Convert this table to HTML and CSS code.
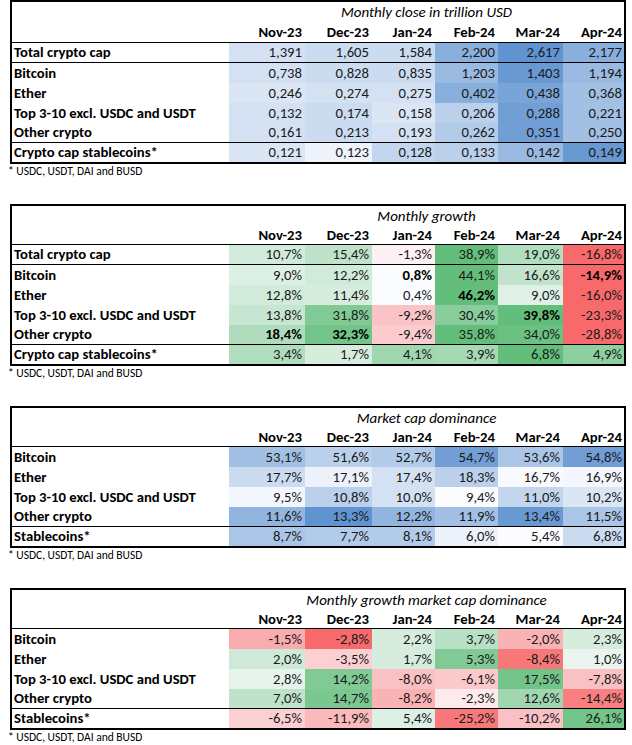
FILE: index.html
```html
<!DOCTYPE html>
<html lang="en">
<head>
<meta charset="utf-8">
<title>Crypto market tables</title>
<link rel="stylesheet" href="styles.css">
</head>
<body>
<section class="block">
  <div class="tbl first">
    <div class="blank"></div>
    <div class="title">Monthly close in trillion USD</div>
    <div class="mon">Nov-23</div><div class="mon">Dec-23</div><div class="mon">Jan-24</div><div class="mon">Feb-24</div><div class="mon">Mar-24</div><div class="mon">Apr-24</div>

    <div class="row sep"><div class="lab">Total crypto cap</div><div class="v" style="background:rgb(211,225,243)">1,391</div><div class="v" style="background:rgb(203,219,240)">1,605</div><div class="v" style="background:rgb(203,219,240)">1,584</div><div class="v" style="background:rgb(137,175,220)">2,200</div><div class="v" style="background:rgb(96,148,208)">2,617</div><div class="v" style="background:rgb(137,175,220)">2,177</div></div>
    <div class="row"><div class="lab">Bitcoin</div><div class="v" style="background:rgb(211,225,243)">0,738</div><div class="v" style="background:rgb(203,219,240)">0,828</div><div class="v" style="background:rgb(203,219,240)">0,835</div><div class="v" style="background:rgb(154,186,225)">1,203</div><div class="v" style="background:rgb(104,153,210)">1,403</div><div class="v" style="background:rgb(154,186,225)">1,194</div></div>
    <div class="row"><div class="lab">Ether</div><div class="v" style="background:rgb(219,230,245)">0,246</div><div class="v" style="background:rgb(211,225,243)">0,274</div><div class="v" style="background:rgb(211,225,243)">0,275</div><div class="v" style="background:rgb(137,175,220)">0,402</div><div class="v" style="background:rgb(121,164,215)">0,438</div><div class="v" style="background:rgb(162,192,228)">0,368</div></div>
    <div class="row"><div class="lab">Top 3-10 excl. USDC and USDT</div><div class="v" style="background:rgb(211,225,243)">0,132</div><div class="v" style="background:rgb(203,219,240)">0,174</div><div class="v" style="background:rgb(219,230,245)">0,158</div><div class="v" style="background:rgb(186,208,235)">0,206</div><div class="v" style="background:rgb(113,159,213)">0,288</div><div class="v" style="background:rgb(162,192,228)">0,221</div></div>
    <div class="row sep"><div class="lab">Other crypto</div><div class="v" style="background:rgb(211,225,243)">0,161</div><div class="v" style="background:rgb(203,219,240)">0,213</div><div class="v" style="background:rgb(211,225,243)">0,193</div><div class="v" style="background:rgb(178,203,233)">0,262</div><div class="v" style="background:rgb(113,159,213)">0,351</div><div class="v" style="background:rgb(162,192,228)">0,250</div></div>
    <div class="row last"><div class="lab">Crypto cap stablecoins*</div><div class="v" style="background:rgb(219,230,245)">0,121</div><div class="v" style="background:rgb(239,243,251)">0,123</div><div class="v" style="background:rgb(195,214,238)">0,128</div><div class="v" style="background:rgb(186,208,235)">0,133</div><div class="v" style="background:rgb(154,186,225)">0,142</div><div class="v" style="background:rgb(104,153,210)">0,149</div></div>
  </div>
  <p class="note">* USDC, USDT, DAI and BUSD</p>
</section>

<section class="block">
  <div class="tbl">
    <div class="blank"></div>
    <div class="title">Monthly growth</div>
    <div class="mon">Nov-23</div><div class="mon">Dec-23</div><div class="mon">Jan-24</div><div class="mon">Feb-24</div><div class="mon">Mar-24</div><div class="mon">Apr-24</div>

    <div class="row sep"><div class="lab">Total crypto cap</div><div class="v" style="background:rgb(209,235,218)">10,7%</div><div class="v" style="background:rgb(191,227,202)">15,4%</div><div class="v" style="background:rgb(252,240,243)">-1,3%</div><div class="v" style="background:rgb(99,190,123)">38,9%</div><div class="v" style="background:rgb(177,222,190)">19,0%</div><div class="v" style="background:rgb(248,105,107)">-16,8%</div></div>
    <div class="row"><div class="lab">Bitcoin</div><div class="v" style="background:rgb(221,240,229)">9,0%</div><div class="v" style="background:rgb(209,235,218)">12,2%</div><div class="v b" style="background:rgb(249,251,252)">0,8%</div><div class="v" style="background:rgb(99,190,123)">44,1%</div><div class="v" style="background:rgb(194,228,205)">16,6%</div><div class="v b" style="background:rgb(248,105,107)">-14,9%</div></div>
    <div class="row"><div class="lab">Ether</div><div class="v" style="background:rgb(209,235,218)">12,8%</div><div class="v" style="background:rgb(214,237,222)">11,4%</div><div class="v" style="background:rgb(250,251,254)">0,4%</div><div class="v b" style="background:rgb(99,190,123)">46,2%</div><div class="v" style="background:rgb(223,240,230)">9,0%</div><div class="v" style="background:rgb(248,105,107)">-16,0%</div></div>
    <div class="row"><div class="lab">Top 3-10 excl. USDC and USDT</div><div class="v" style="background:rgb(198,230,209)">13,8%</div><div class="v" style="background:rgb(130,202,149)">31,8%</div><div class="v" style="background:rgb(250,195,197)">-9,2%</div><div class="v" style="background:rgb(136,205,155)">30,4%</div><div class="v b" style="background:rgb(99,190,123)">39,8%</div><div class="v" style="background:rgb(248,105,107)">-23,3%</div></div>
    <div class="row sep"><div class="lab">Other crypto</div><div class="v b" style="background:rgb(174,220,188)">18,4%</div><div class="v b" style="background:rgb(114,196,136)">32,3%</div><div class="v" style="background:rgb(251,203,206)">-9,4%</div><div class="v" style="background:rgb(99,190,123)">35,8%</div><div class="v" style="background:rgb(107,193,130)">34,0%</div><div class="v" style="background:rgb(248,105,107)">-28,8%</div></div>
    <div class="row last"><div class="lab">Crypto cap stablecoins*</div><div class="v" style="background:rgb(176,221,189)">3,4%</div><div class="v" style="background:rgb(214,237,222)">1,7%</div><div class="v" style="background:rgb(160,215,176)">4,1%</div><div class="v" style="background:rgb(165,217,180)">3,9%</div><div class="v" style="background:rgb(99,190,123)">6,8%</div><div class="v" style="background:rgb(142,207,160)">4,9%</div></div>
  </div>
  <p class="note">* USDC, USDT, DAI and BUSD</p>
</section>

<section class="block">
  <div class="tbl">
    <div class="blank"></div>
    <div class="title">Market cap dominance</div>
    <div class="mon">Nov-23</div><div class="mon">Dec-23</div><div class="mon">Jan-24</div><div class="mon">Feb-24</div><div class="mon">Mar-24</div><div class="mon">Apr-24</div>

    <div class="row"><div class="lab">Bitcoin</div><div class="v" style="background:rgb(162,192,228)">53,1%</div><div class="v" style="background:rgb(186,208,235)">51,6%</div><div class="v" style="background:rgb(178,203,233)">52,7%</div><div class="v" style="background:rgb(113,159,213)">54,7%</div><div class="v" style="background:rgb(170,197,230)">53,6%</div><div class="v" style="background:rgb(113,159,213)">54,8%</div></div>
    <div class="row"><div class="lab">Ether</div><div class="v" style="background:rgb(203,219,240)">17,7%</div><div class="v" style="background:rgb(236,241,250)">17,1%</div><div class="v" style="background:rgb(211,225,243)">17,4%</div><div class="v" style="background:rgb(186,208,235)">18,3%</div><div class="v" style="background:rgb(249,250,254)">16,7%</div><div class="v" style="background:rgb(244,247,253)">16,9%</div></div>
    <div class="row"><div class="lab">Top 3-10 excl. USDC and USDT</div><div class="v" style="background:rgb(244,247,253)">9,5%</div><div class="v" style="background:rgb(186,208,235)">10,8%</div><div class="v" style="background:rgb(211,225,243)">10,0%</div><div class="v" style="background:rgb(252,252,255)">9,4%</div><div class="v" style="background:rgb(195,214,238)">11,0%</div><div class="v" style="background:rgb(219,230,245)">10,2%</div></div>
    <div class="row sep"><div class="lab">Other crypto</div><div class="v" style="background:rgb(146,181,223)">11,6%</div><div class="v" style="background:rgb(96,148,208)">13,3%</div><div class="v" style="background:rgb(146,181,223)">12,2%</div><div class="v" style="background:rgb(162,192,228)">11,9%</div><div class="v" style="background:rgb(104,153,210)">13,4%</div><div class="v" style="background:rgb(170,197,230)">11,5%</div></div>
    <div class="row last"><div class="lab">Stablecoins*</div><div class="v" style="background:rgb(170,197,230)">8,7%</div><div class="v" style="background:rgb(178,203,233)">7,7%</div><div class="v" style="background:rgb(178,203,233)">8,1%</div><div class="v" style="background:rgb(236,241,250)">6,0%</div><div class="v" style="background:rgb(252,252,255)">5,4%</div><div class="v" style="background:rgb(203,219,240)">6,8%</div></div>
  </div>
  <p class="note">* USDC, USDT, DAI and BUSD</p>
</section>

<section class="block">
  <div class="tbl">
    <div class="blank"></div>
    <div class="title">Monthly growth market cap dominance</div>
    <div class="mon">Nov-23</div><div class="mon">Dec-23</div><div class="mon">Jan-24</div><div class="mon">Feb-24</div><div class="mon">Mar-24</div><div class="mon">Apr-24</div>

    <div class="row"><div class="lab">Bitcoin</div><div class="v" style="background:rgb(250,171,174)">-1,5%</div><div class="v" style="background:rgb(248,105,107)">-2,8%</div><div class="v" style="background:rgb(214,237,222)">2,2%</div><div class="v" style="background:rgb(183,224,196)">3,7%</div><div class="v" style="background:rgb(250,179,181)">-2,0%</div><div class="v" style="background:rgb(214,237,222)">2,3%</div></div>
    <div class="row"><div class="lab">Ether</div><div class="v" style="background:rgb(206,233,215)">2,0%</div><div class="v" style="background:rgb(251,208,211)">-3,5%</div><div class="v" style="background:rgb(214,237,222)">1,7%</div><div class="v" style="background:rgb(130,202,149)">5,3%</div><div class="v" style="background:rgb(248,120,122)">-8,4%</div><div class="v" style="background:rgb(234,245,239)">1,0%</div></div>
    <div class="row"><div class="lab">Top 3-10 excl. USDC and USDT</div><div class="v" style="background:rgb(229,243,235)">2,8%</div><div class="v" style="background:rgb(130,202,149)">14,2%</div><div class="v" style="background:rgb(250,193,196)">-8,0%</div><div class="v" style="background:rgb(251,201,203)">-6,1%</div><div class="v" style="background:rgb(114,196,136)">17,5%</div><div class="v" style="background:rgb(250,193,196)">-7,8%</div></div>
    <div class="row sep"><div class="lab">Other crypto</div><div class="v" style="background:rgb(191,227,202)">7,0%</div><div class="v" style="background:rgb(122,199,143)">14,7%</div><div class="v" style="background:rgb(250,179,181)">-8,2%</div><div class="v" style="background:rgb(252,234,237)">-2,3%</div><div class="v" style="background:rgb(160,215,176)">12,6%</div><div class="v" style="background:rgb(249,127,129)">-14,4%</div></div>
    <div class="row last"><div class="lab">Stablecoins*</div><div class="v" style="background:rgb(251,208,211)">-6,5%</div><div class="v" style="background:rgb(250,186,188)">-11,9%</div><div class="v" style="background:rgb(221,240,229)">5,4%</div><div class="v" style="background:rgb(248,120,122)">-25,2%</div><div class="v" style="background:rgb(250,193,196)">-10,2%</div><div class="v" style="background:rgb(114,196,136)">26,1%</div></div>
  </div>
  <p class="note">* USDC, USDT, DAI and BUSD</p>
</section>
</body>
</html>
```
FILE: styles.css
```css
* { box-sizing: border-box; }
html, body { margin: 0; background: #fff; }
body {
  padding: 0 6px 0 8px;
  font-family: Carlito, Calibri, Lato, "Liberation Sans", sans-serif;
  color: #000;
  font-size: 14.7px;
}
.block { padding-bottom: 25px; }
.tbl {
  display: grid;
  grid-template-columns: 217px 76px 67px 63px 63px 65px 61px;
  width: 616px;
  margin-left: 2px;
  border: 2px solid #000;
}
.row { display: contents; }
.blank {
  grid-row: span 2;
  border-bottom: 1px solid #000;
}
.title {
  grid-column: span 6;
  height: 20px;
  line-height: 20px;
  text-align: center;
  font-style: italic;
  font-size: 15px;
}
.mon {
  height: 19px;
  line-height: 18px;
  border-bottom: 1px solid #000;
  text-align: right;
  padding-right: 3px;
  font-weight: 700;
}
.first .title { height: 21px; line-height: 21px; }
.first .mon { height: 20px; line-height: 19px; }
.lab, .v {
  height: 20px;
  line-height: 20px;
  white-space: nowrap;
}
.lab { font-weight: 700; padding-left: 2px; }
.v { text-align: right; padding-right: 3px; color: #1a1a1a; }
.mon:nth-child(8), .v:last-child { padding-right: 2px; }
.v.b { font-weight: 700; color: #000; }
.sep > div { border-bottom: 1px solid #000; line-height: 19px; }
.last > div { height: 19px; line-height: 19px; }
.note {
  margin: 0;
  height: 15px;
  line-height: 15px;
  font-size: 11.5px;
}
```
